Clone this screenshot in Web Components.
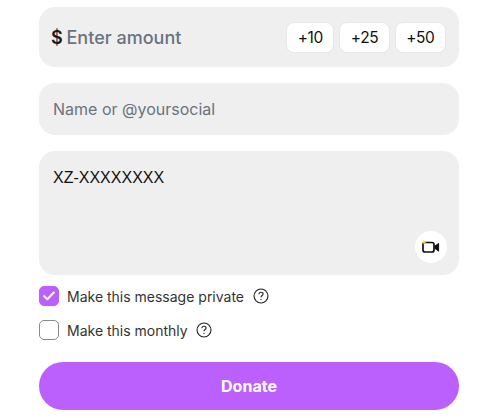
<!DOCTYPE html>
<html>
<head>
<meta charset="utf-8">
<style>
  html, body { margin: 0; padding: 0; background: #fff; }
  body { font-family: "Inter", "Liberation Sans", sans-serif; overflow: hidden; }
</style>
</head>
<body>
<donate-form>
  <amount-field></amount-field>
  <text-field>Name or @yoursocial</text-field>
  <message-field>XZ-XXXXXXXX</message-field>
  <check-row checked>Make this message private</check-row>
  <check-row>Make this monthly</check-row>
  <donate-button>Donate</donate-button>
</donate-form>
<script>
class DonateForm extends HTMLElement {
  connectedCallback() {
    this.attachShadow({ mode: "open" });
    this.shadowRoot.innerHTML = `
      <style>
        :host { display: block; width: 420px; margin-left: 39px; padding-top: 7px; }
        .col { display: flex; flex-direction: column; }
      </style>
      <div class="col"><slot></slot></div>
    `;
  }
}

class AmountField extends HTMLElement {
  connectedCallback() {
    this.attachShadow({ mode: "open" });
    let chips = ["+10", "+25", "+50"].map((v) => `<button>${v}</button>`).join("");
    this.shadowRoot.innerHTML = `
      <style>
        :host {
          display: flex; align-items: center; height: 60px; box-sizing: border-box;
          padding: 0 13px 0 12px; background: #efefef; border-radius: 16px; margin-bottom: 16px;
        }
        .cur { font-size: 18px; font-weight: 600; color: #1a1a1a; width: 15.5px; }
        .ph { font-size: 18px; font-weight: 500; color: #6b7280; flex: 1; }
        .chips { display: flex; gap: 5px; }
        button {
          height: 31px; padding: 0 10.5px; border: 1px solid #e8e8e8; border-radius: 8px; background: #fff;
          font: 400 15.5px "Inter", "Liberation Sans", sans-serif; color: #111; letter-spacing: -0.4px;
        }
      </style>
      <span class="cur">$</span><span class="ph">Enter amount</span>
      <div class="chips">${chips}</div>
    `;
  }
}

class TextField extends HTMLElement {
  connectedCallback() {
    this.attachShadow({ mode: "open" });
    this.shadowRoot.innerHTML = `
      <style>
        :host {
          display: flex; align-items: center; height: 52px; box-sizing: border-box;
          padding: 0 14px; background: #efefef; border-radius: 16px; margin-bottom: 16px;
          font-size: 16px; color: #6b7280;
        }
      </style>
      <slot></slot>
    `;
  }
}

class MessageField extends HTMLElement {
  connectedCallback() {
    this.attachShadow({ mode: "open" });
    this.shadowRoot.innerHTML = `
      <style>
        :host {
          display: block; position: relative; height: 124px; box-sizing: border-box;
          padding: 17px 14px 0; background: #efefef; border-radius: 16px; margin-bottom: 11px;
          font: 16px/20px "Liberation Sans", sans-serif; color: #111;
        }
        .cam {
          position: absolute; right: 12px; bottom: 12px; width: 32px; height: 32px; border-radius: 50%;
          background: #fff; display: flex; align-items: center; justify-content: center;
        }
      </style>
      <slot></slot>
      <div class="cam">
        <svg width="18" height="14" viewBox="0 0 18 14" fill="none">
          <rect x="1" y="2.5" width="11" height="9.5" rx="2" stroke="#111" stroke-width="1.7"/>
          <path d="M13 6 L16.6 3.4 V11.1 L13 8.5 Z" fill="#111" stroke="#111" stroke-width="1" stroke-linejoin="round"/>
          <path d="M2 .2 L2.8 1.8 L4.4 2.5 L2.8 3.2 L2 4.8 L1.2 3.2 L-.4 2.5 L1.2 1.8 Z" fill="#f5c242"/>
        </svg>
      </div>
    `;
  }
}

class CheckRow extends HTMLElement {
  connectedCallback() {
    this.attachShadow({ mode: "open" });
    let on = this.hasAttribute("checked");
    this.shadowRoot.innerHTML = `
      <style>
        :host {
          display: flex; align-items: center; height: 20px; margin-bottom: 14px;
          font-size: 14px; color: #333;
        }
        .box {
          width: 20px; height: 20px; box-sizing: border-box; border-radius: 5px; margin-right: 8px;
          border: 1px solid ${on ? "#bc60fd" : "#8a8a8a"}; background: ${on ? "#bc60fd" : "#fff"};
          display: flex; align-items: center; justify-content: center;
        }
        .help { margin-left: 8.5px; display: block; }
      </style>
      <div class="box">
        ${on ? `<svg width="12" height="10" viewBox="0 0 12 10" fill="none"><path d="M1.2 5.2 L4.3 8.2 L10.8 1.6" stroke="#fff" stroke-width="2.1" stroke-linecap="round" stroke-linejoin="round"/></svg>` : ""}
      </div>
      <slot></slot>
      <svg class="help" width="16" height="16" viewBox="0 0 16 16" fill="none" stroke="#222" stroke-width="1.1">
        <circle cx="8" cy="8" r="7"/>
        <path d="M5.9 6.2 C5.9 5 6.9 4.3 8 4.3 C9.2 4.3 10.1 5 10.1 6.1 C10.1 7.5 8 7.6 8 9.3"/>
        <circle cx="8" cy="11.4" r=".6" fill="#222" stroke="none"/>
      </svg>
    `;
  }
}

class DonateButton extends HTMLElement {
  connectedCallback() {
    this.attachShadow({ mode: "open" });
    this.shadowRoot.innerHTML = `
      <style>
        :host {
          display: flex; align-items: center; justify-content: center; height: 48px; margin-top: 8px;
          background: #bc60fd; border-radius: 24px; color: #fff; font-size: 16px; font-weight: 700;
        }
      </style>
      <slot></slot>
    `;
  }
}

customElements.define("donate-form", DonateForm);
customElements.define("amount-field", AmountField);
customElements.define("text-field", TextField);
customElements.define("message-field", MessageField);
customElements.define("check-row", CheckRow);
customElements.define("donate-button", DonateButton);
</script>
</body>
</html>
